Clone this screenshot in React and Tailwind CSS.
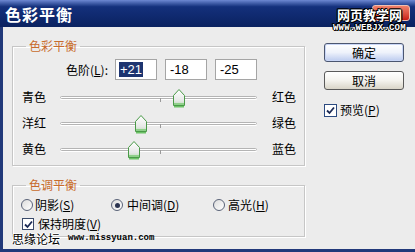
// 色彩平衡 dialog (XP-style)
const SLIDERS = [
  { left: "青色", right: "红色", value: 21 },
  { left: "洋红", right: "绿色", value: -18 },
  { left: "黄色", right: "蓝色", value: -25 },
];

const TRACK_W = 197;

function Thumb() {
  return (
    <svg width="14" height="20" viewBox="0 0 14 20">
      <defs>
        <linearGradient id="tg" x1="0" y1="0" x2="0" y2="1">
          <stop offset="0" stopColor="#ffffff" />
          <stop offset="0.7" stopColor="#e6e8e6" />
          <stop offset="1" stopColor="#b9dcb4" />
        </linearGradient>
      </defs>
      <path d="M1.5 7.5 L7 1.5 L12.5 7.5 L12.5 17.5 L1.5 17.5 Z" fill="url(#tg)" stroke="#4a9a48" strokeWidth="1" />
      <rect x="2" y="15" width="10" height="2" fill="#8fd08a" />
      <rect x="2" y="18" width="10" height="1.5" fill="#6cc266" />
    </svg>
  );
}

function Slider({ value }) {
  const x = ((value + 100) / 200) * TRACK_W;
  return (
    <div className="relative w-[197px] h-[26px] flex items-center">
      <div className="w-full h-[3px] rounded-full border border-[#b4b4b4] bg-white shadow-[0_1px_0_#fff]" />
      <div className="absolute left-[100px] top-[14px] w-px h-[4px] bg-[#9a9a9a]" />
      <div className="absolute top-[4px]" style={{ left: x - 7 }}>
        <Thumb />
      </div>
    </div>
  );
}

function Check() {
  return (
    <svg width="9" height="9" viewBox="0 0 9 9">
      <path d="M1 4.5 L3.5 7 L8 1.5" fill="none" stroke="#1b2a55" strokeWidth="1.8" />
    </svg>
  );
}

function Radio({ checked }) {
  return (
    <div className="w-[12px] h-[12px] rounded-full border border-[#5a6378] bg-gradient-to-br from-[#dcdcdc] to-white flex items-center justify-center">
      {checked && <div className="w-[5px] h-[5px] rounded-full bg-[#2a3350]" />}
    </div>
  );
}

const outline = "[text-shadow:1px_0_0_#000,-1px_0_0_#000,0_1px_0_#000,0_-1px_0_#000,1px_1px_0_#000,-1px_-1px_0_#000]";
const whiteOutline = "[text-shadow:1px_0_0_#fff,-1px_0_0_#fff,0_1px_0_#fff,0_-1px_0_#fff]";

export default function App() {
  return (
    <div className="relative w-[415px] h-[252px] overflow-hidden bg-[#ececec] text-[12px] leading-[16px] text-black font-['Noto_Sans_CJK_SC','Liberation_Sans',sans-serif]">
      {/* 标题栏 */}
      <div className="h-[27px] flex items-center pl-[5px] bg-gradient-to-b from-[#6e88d2] via-[#14307c] via-25% to-[#0a2260]">
        <span className="text-[16px] font-bold text-white tracking-[1px]">色彩平衡</span>
      </div>
      <div className="absolute left-[372px] top-[5px] w-[38px] h-[16px] rounded-[3px] border border-[#f0c0b0] bg-gradient-to-b from-[#f0806a] to-[#c81810]" />

      <div className="flex h-[225px] border-l-[3px] border-b-[3px] border-[#22397a] pl-[9px]">
        {/* 左列 */}
        <div className="w-[293px]">
          <fieldset className="mt-[11px] border border-[#c6c6c6] shadow-[inset_1px_1px_0_#fff,1px_1px_0_#fff] pb-[3px]">
            <legend className="ml-[13px] px-[3px] text-[#c86b2c]">色彩平衡</legend>
            <div className="mt-[5px] flex items-center">
              <span className="w-[95px] text-right">色阶(<u>L</u>):</span>
              <div className="ml-[7px] flex gap-[8px] font-['Liberation_Sans',sans-serif] text-[13px]">
                <div className="w-[42px] h-[21px] border border-[#a5a5a5] bg-white flex items-center pl-[3px]">
                  <span className="bg-[#1d3470] text-white px-px leading-[15px]">+21</span>
                </div>
                <div className="w-[42px] h-[21px] border border-[#a5a5a5] bg-white flex items-center pl-[4px]">-18</div>
                <div className="w-[42px] h-[21px] border border-[#a5a5a5] bg-white flex items-center pl-[4px]">-25</div>
              </div>
            </div>
            <div className="mt-[4px]">
              {SLIDERS.map((s) => (
                <div key={s.left} className="flex items-center h-[26px] pl-[9px]">
                  <span className="w-[38px]">{s.left}</span>
                  <Slider value={s.value} />
                  <span className="ml-[15px]">{s.right}</span>
                </div>
              ))}
            </div>
          </fieldset>

          <fieldset className="mt-[11px] border border-[#c6c6c6] shadow-[inset_1px_1px_0_#fff,1px_1px_0_#fff] pb-[4px]">
            <legend className="ml-[13px] px-[3px] text-[#c86b2c]">色调平衡</legend>
            <div className="mt-[4px] h-[16px] flex items-center pl-[8px]">
              <div className="w-[90px] flex items-center">
                <Radio />
                <span className="ml-[2px]">阴影(<u>S</u>)</span>
              </div>
              <div className="w-[102px] flex items-center">
                <Radio checked />
                <span className="ml-[4px]">中间调(<u>D</u>)</span>
              </div>
              <div className="flex items-center">
                <Radio />
                <span className="ml-[3px]">高光(<u>H</u>)</span>
              </div>
            </div>
            <div className="mt-[3px] h-[16px] flex items-center pl-[9px]">
              <div className="w-[12px] h-[12px] border border-[#3a4a6a] bg-white flex items-center justify-center">
                <Check />
              </div>
              <span className="ml-[4px] leading-[14px]">保持明度(<u>V</u>)</span>
            </div>
          </fieldset>
        </div>

        {/* 右列 */}
        <div className="ml-[19px] w-[80px]">
          <button className="mt-[16px] w-[80px] h-[19px] rounded-[3px] border border-[#4b5670] bg-gradient-to-b from-white via-[#eef2fb] to-[#bccbef] shadow-[inset_0_0_0_1px_#c9d6f6] flex items-center justify-center">
            确定
          </button>
          <button className="mt-[9px] w-[80px] h-[19px] rounded-[3px] border border-[#5a5a5a] bg-gradient-to-b from-white via-[#f4f3ee] to-[#d9d5c8] flex items-center justify-center">
            取消
          </button>
          <div className="mt-[12px] h-[16px] flex items-center">
            <div className="w-[13px] h-[13px] border border-[#2b4a80] bg-white flex items-center justify-center">
              <Check />
            </div>
            <span className="ml-[3px]">预览(<u>P</u>)</span>
          </div>
        </div>
      </div>

      {/* 水印 */}
      <div className={"absolute left-[337px] top-[7px] text-white text-[13px] leading-[16px] font-bold " + outline}>
        网页教学网
      </div>
      <div className={"absolute left-[333px] top-[23px] text-white text-[9px] leading-[10px] font-bold font-['Liberation_Mono',monospace] tracking-[0.2px] " + outline}>
        WWW.WEBJX.COM
      </div>
      <div className={"absolute left-[12px] top-[232px] text-[12px] leading-[13px] text-black " + whiteOutline}>
        思缘论坛
      </div>
      <div className="absolute left-[68px] top-[233px] text-[9px] leading-[10px] font-bold font-['Liberation_Mono',monospace] text-black">
        www.missyuan.com
      </div>
    </div>
  );
}
